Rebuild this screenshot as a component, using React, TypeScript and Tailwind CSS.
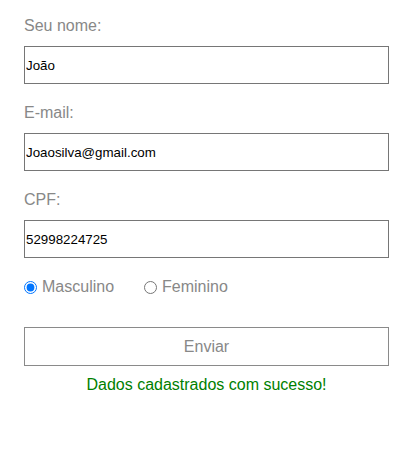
export default function App() {
  const label = "block text-[16px] leading-[18px] text-[#888888]";
  const input =
    "mt-[11px] block h-[38px] w-full border border-[#767676] bg-white px-[1px] text-[13.33px] text-black outline-none";
  return (
    <div
      className="min-h-[474px] bg-white pt-[17px] pl-[24px]"
      style={{ fontFamily: '"Liberation Sans", Arial, sans-serif' }}
    >
      <form className="w-[365px]" onSubmit={(e) => e.preventDefault()}>
        <label className={label}>Seu nome:</label>
        <input className={input} type="text" defaultValue="João" />

        <label className={`${label} mt-[20px]`}>E-mail:</label>
        <input className={input} type="text" defaultValue="Joaosilva@gmail.com" />

        <label className={`${label} mt-[20px]`}>CPF:</label>
        <input className={input} type="text" defaultValue="52998224725" />

        <div className="mt-[20px] flex items-center text-[16px] leading-[18px] text-[#888888]">
          <label className="flex items-center">
            <input
              type="radio"
              name="sexo"
              defaultChecked
              className="m-0 mr-[5px] h-[13px] w-[13px] accent-[#0075ff]"
            />
            Masculino
          </label>
          <label className="ml-[30px] flex items-center">
            <input
              type="radio"
              name="sexo"
              className="m-0 mr-[5px] h-[13px] w-[13px]"
            />
            Feminino
          </label>
        </div>

        <button
          type="submit"
          className="mt-[31px] block h-[39px] w-full border border-[#8a8a8a] bg-white text-[16px] text-[#888888]"
        >
          Enviar
        </button>

        <p className="mt-[10px] text-center text-[16px] leading-[18px] text-[#008000]">
          Dados cadastrados com sucesso!
        </p>
      </form>
    </div>
  );
}
